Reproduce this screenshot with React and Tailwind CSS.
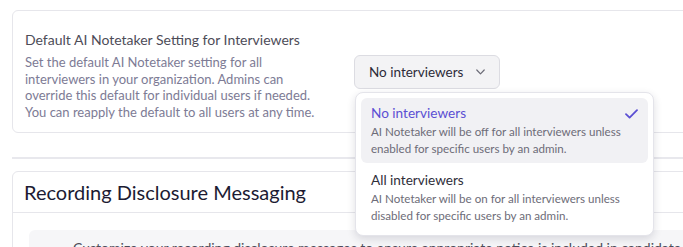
import React, { useState } from "react";

const options = [
  {
    value: "none",
    label: "No interviewers",
    desc: "AI Notetaker will be off for all interviewers unless enabled for specific users by an admin.",
  },
  {
    value: "all",
    label: "All interviewers",
    desc: "AI Notetaker will be on for all interviewers unless disabled for specific users by an admin.",
  },
];

function Check() {
  return (
    <svg width="13" height="10" viewBox="0 0 13 10" fill="none" className="text-[#5b4fd3]">
      <path d="M1 5.2 4.6 8.6 12 1.2" stroke="currentColor" strokeWidth="1.8" strokeLinecap="round" strokeLinejoin="round" />
    </svg>
  );
}

function Chevron() {
  return (
    <svg width="9" height="6" viewBox="0 0 9 6" fill="none" className="text-[#6b6b76]">
      <path d="M0.8 1 4.5 4.8 8.2 1" stroke="currentColor" strokeWidth="1.2" strokeLinecap="round" strokeLinejoin="round" />
    </svg>
  );
}

function NotetakerSelect() {
  const [selected, setSelected] = useState("none");
  const [open, setOpen] = useState(true);
  const current = options.find((o) => o.value === selected);

  return (
    <div className="relative">
      <button
        onClick={() => setOpen((p) => !p)}
        className="flex items-center gap-[13px] h-[34px] pl-[14px] pr-[14px] rounded-md bg-[#f3f3f5] border border-[#dcdce2] text-[13.5px] text-[#2c2b38]"
      >
        {current.label}
        <Chevron />
      </button>

      {/* MENU */}
      {open && (
        <div className="absolute left-[1px] top-[37px] w-[299px] z-10 bg-white rounded-lg border border-[#e4e4ea] shadow-[0_3px_8px_rgba(30,30,60,0.14)] p-[5px]">
          {options.map((o) => {
            const active = o.value === selected;
            return (
              <div
                key={o.value}
                onClick={() => setSelected(o.value)}
                className={`relative px-[10px] py-[6px] rounded-md cursor-pointer ${active ? "bg-[#f1f1f4]" : "mt-[2px]"}`}
              >
                <p className={`text-[13.6px] leading-[18px] ${active ? "text-[#5b4fd3]" : "text-[#2f2e3a]"}`}>{o.label}</p>
                <p className="mt-[1px] text-[11.6px] leading-[17px] text-[#6d6c78]">{o.desc}</p>
                {active && (
                  <span className="absolute right-[10px] top-[11px]">
                    <Check />
                  </span>
                )}
              </div>
            );
          })}
        </div>
      )}
    </div>
  );
}

export default function App() {
  return (
    <div className="w-[683px] h-[247px] overflow-hidden bg-white font-[Lato,sans-serif]">
      <div className="w-[720px] pl-[12px] pt-[10px]">
        {/* AI NOTETAKER DEFAULT */}
        <div className="flex h-[123px] rounded-md border border-[#e6e6eb] pl-[12px] pt-[20px]">
          <div className="w-[329px]">
            <h3 className="text-[14px] leading-[18px] text-[#4d4c58]">Default AI Notetaker Setting for Interviewers</h3>
            <p className="mt-[5px] w-[290px] text-[13px] leading-[16.5px] text-[#7d7b95]">
              Set the default AI Notetaker setting for all interviewers in your organization. Admins can override this default for individual users if needed. You can reapply the default to all users at any time.
            </p>
          </div>
          <div className="pt-[24px]">
            <NotetakerSelect />
          </div>
        </div>

        <div className="mt-[24px] h-[2px] bg-[#e8e8ed]" />

        {/* RECORDING DISCLOSURE */}
        <div className="mt-[12px] rounded-md border border-[#e6e6eb]">
          <div className="px-[11px] h-[41px] flex items-center border-b border-[#e6e6eb]">
            <h2 className="text-[20px] text-[#1c1b33]">Recording Disclosure Messaging</h2>
          </div>
          <div className="pl-[16px] pt-[17px]">
            <div className="rounded-md bg-[#f6f6f8] pl-[44px] pt-[7px] h-[60px] text-[14px] text-[#4d4c58] whitespace-nowrap">
              Customize your recording disclosure messages to ensure appropriate notice is included in candidate and interviewer invites.
            </div>
          </div>
        </div>
      </div>
    </div>
  );
}
